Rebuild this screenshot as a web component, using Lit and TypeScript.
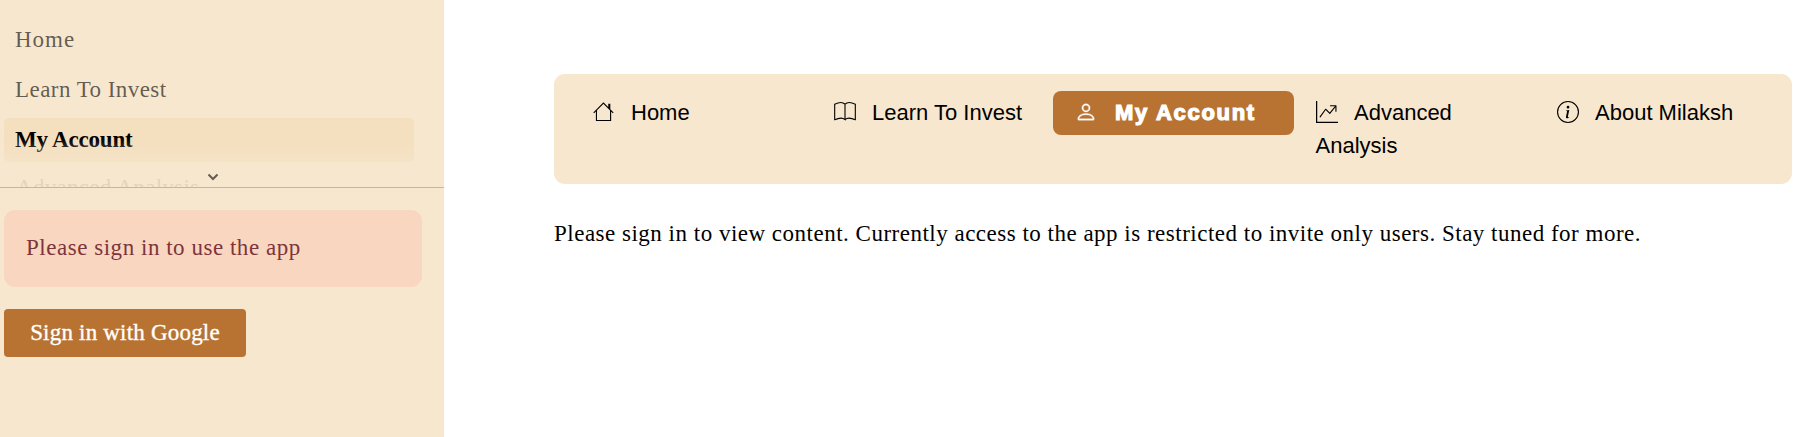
import { LitElement, html, svg, css } from "lit";
import { customElement } from "lit/decorators.js";
import { classMap } from "lit/directives/class-map.js";

const icons: Record<string, string[]> = {
  person: [
    "M8 8a3 3 0 1 0 0-6 3 3 0 0 0 0 6zm2-3a2 2 0 1 1-4 0 2 2 0 0 1 4 0zm4 8c0 1-1 1-1 1H3s-1 0-1-1 1-4 6-4 6 3 6 4zm-1-.004c-.001-.246-.154-.986-.832-1.664C11.516 10.68 10.289 10 8 10c-2.29 0-3.516.68-4.168 1.332-.678.678-.83 1.418-.832 1.664h10z",
  ],
  graph: [
    "M0 0h.9v15.1H16v.9H0V0zm10.1 3.5a.4.4 0 0 1 .4-.4h4a.4.4 0 0 1 .4.4v4a.4.4 0 0 1-.8 0V4.6l-3.75 4.65a.4.4 0 0 1-.6.03L7.05 6.6l-3.73 5.13a.4.4 0 0 1-.65-.47l4-5.5a.4.4 0 0 1 .61-.05l2.72 2.72L13.7 3.9h-3.2a.4.4 0 0 1-.4-.4z",
  ],
  info: [
    "M8 15.2A7.2 7.2 0 1 1 8 .8a7.2 7.2 0 0 1 0 14.4zm0 .8A8 8 0 1 0 8 0a8 8 0 0 0 0 16z",
    "m8.93 6.588-2.29.287-.082.38.45.083c.294.07.352.176.288.469l-.738 3.468c-.194.897.105 1.319.808 1.319.545 0 1.178-.252 1.465-.598l.088-.416c-.2.176-.492.246-.686.246-.275 0-.375-.193-.304-.533L8.93 6.588zM9 4.5a1 1 0 1 1-2 0 1 1 0 0 1 2 0z",
  ],
};

const outlines: Record<string, string> = {
  house: "M.5 8.6 7.600 1.5l7.1 7.1M2.500 6.900v7.300h10.300V6.900M11.500 5V2.400h.7v3.300z",
  book: "M.5 14V2.3C2.8 1.2 6.300 .6 8 2.300v11.200C6.300 12 2.800 12.600 .5 13.700M8 2.300C9.700 .6 13.200 1.200 15.500 2.300V14M8 13.500C9.700 12 13.200 12.600 15.500 13.700",
};

const pages = [
  { label: "Home", icon: "house" },
  { label: "Learn To Invest", icon: "book" },
  { label: "My Account", icon: "person" },
  { label: "Advanced Analysis", icon: "graph" },
  { label: "About Milaksh", icon: "info" },
];

@customElement("side-bar")
class SideBar extends LitElement {
  static styles = css`
    :host { display: block; width: 444px; flex: none; background: #f7e7ce; }
    .list { position: relative; height: 168px; padding: 19px 30px 0 4px; overflow: hidden; border-bottom: 1px solid #c6b5a0; }
    .item { display: block; height: 44px; line-height: 42px; margin-bottom: 5.5px; padding-left: 11px; border-radius: 5px; color: rgba(0, 0, 0, 0.62); white-space: nowrap; letter-spacing: 0.45px; }
    .item:first-child { letter-spacing: 1px; }
    .item.active { background: #f4dfbe; color: #000; font-weight: 700; letter-spacing: -0.2px; line-height: 43px; }
    .item.more { line-height: 40px; padding-left: 12px; letter-spacing: 0.3px; }
    .fade { position: absolute; left: 0; right: 0; bottom: 0; height: 48px; background: linear-gradient(rgba(247, 231, 206, 0), rgba(247, 231, 206, 0.86) 80%); }
    .chevron { position: absolute; left: 207px; top: 173px; width: 12px; height: 8px; fill: none; stroke: #655d52; stroke-width: 2; }
    .alert { margin: 22px 22px 22px 4px; height: 77px; line-height: 76px; padding-left: 22px; border-radius: 11px; background: #f9d6c0; color: #7d353b; letter-spacing: 0.53px; }
    .signin { display: block; margin-left: 4px; width: 242px; height: 48px; padding: 0; border: 0; border-radius: 4px; background: #b87333; color: #fff; font: inherit; letter-spacing: 0.2px; -webkit-text-stroke: 0.35px #fff; }
  `;
  render() {
    return html`
      <nav class="list">
        ${pages.slice(0, 4).map((p) => html`<a class=${classMap({ item: true, active: p.icon === "person", more: p.icon === "graph" })}>${p.label}</a>`)}
        <div class="fade"></div>
        <svg class="chevron" viewBox="0 0 12 8"><path d="M1.5 1.5 6 6l4.500-4.500" /></svg>
      </nav>
      <div class="alert">Please sign in to use the app</div>
      <button class="signin">Sign in with Google</button>
    `;
  }
}

@customElement("top-menu")
class TopMenu extends LitElement {
  static styles = css`
    :host { display: grid; grid-template-columns: repeat(5, 241px); align-items: start; height: 110px; box-sizing: border-box; padding: 17px 16px 0 17px; border-radius: 11px; background: #f7e7ce; font-family: "Liberation Sans", Arial, sans-serif; color: #000; }
    .link { padding: 5px 21px 6px 21.5px; line-height: 33px; border-radius: 8px; }
    .link.active { background: #b87333; color: #fff; font-weight: 700; -webkit-text-stroke: 1.2px #fff; letter-spacing: 1.7px; }
    .icon { width: 22px; height: 22px; margin-right: 16.5px; vertical-align: -3px; fill: currentColor; overflow: visible; }
    .outline { fill: none; stroke: currentColor; stroke-width: 0.8; }
    .active .icon { margin-right: 18.5px; stroke: currentColor; stroke-width: 0.25; }
  `;
  private glyph(name: string) {
    return outlines[name]
      ? svg`<path class="outline" d=${outlines[name]} />`
      : icons[name].map((d) => svg`<path d=${d} />`);
  }
  render() {
    return html`${pages.map(
      (p) => html`<a class=${classMap({ link: true, active: p.icon === "person" })}><svg class="icon" viewBox="0 0 16 16">${this.glyph(p.icon)}</svg>${p.label}</a>`
    )}`;
  }
}

@customElement("app-root")
class AppRoot extends LitElement {
  static styles = css`
    :host { display: flex; height: 437px; overflow: hidden; background: #fff; font: 23px "Liberation Serif", serif; color: #000; }
    top-menu { font-size: 22px; }
    .main { flex: 1; min-width: 0; padding: 74px 24px 0 110px; }
    .note { margin: 33px 0 0; line-height: 34px; white-space: nowrap; letter-spacing: 0.5px; }
  `;
  render() {
    return html`
      <side-bar></side-bar>
      <main class="main">
        <top-menu></top-menu>
        <p class="note">Please sign in to view content. Currently access to the app is restricted to invite only users. Stay tuned for more.</p>
      </main>
    `;
  }
}
